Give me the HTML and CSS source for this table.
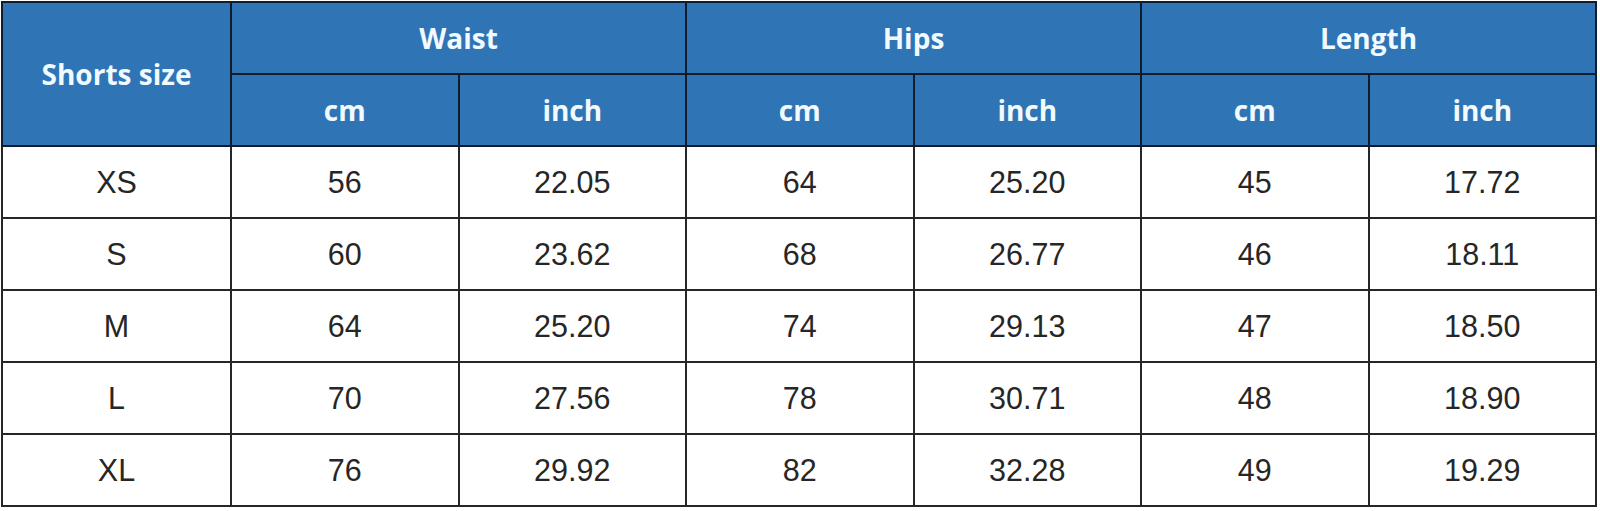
FILE: index.html
```html
<!DOCTYPE html>
<html>
<head>
<meta charset="utf-8">
<link rel="stylesheet" href="styles.css">
</head>
<body>
<table class="size-table">
  <colgroup>
    <col class="c-first">
    <col><col><col><col><col><col>
  </colgroup>
  <thead>
    <tr>
      <th rowspan="2" class="h-size">Shorts size</th>
      <th colspan="2">Waist</th>
      <th colspan="2">Hips</th>
      <th colspan="2">Length</th>
    </tr>
    <tr>
      <th>cm</th><th>inch</th>
      <th>cm</th><th>inch</th>
      <th>cm</th><th>inch</th>
    </tr>
  </thead>
  <tbody>
    <tr><td>XS</td><td>56</td><td>22.05</td><td>64</td><td>25.20</td><td>45</td><td>17.72</td></tr>
    <tr><td>S</td><td>60</td><td>23.62</td><td>68</td><td>26.77</td><td>46</td><td>18.11</td></tr>
    <tr><td>M</td><td>64</td><td>25.20</td><td>74</td><td>29.13</td><td>47</td><td>18.50</td></tr>
    <tr><td>L</td><td>70</td><td>27.56</td><td>78</td><td>30.71</td><td>48</td><td>18.90</td></tr>
    <tr><td>XL</td><td>76</td><td>29.92</td><td>82</td><td>32.28</td><td>49</td><td>19.29</td></tr>
  </tbody>
</table>
</body>
</html>
```

FILE: styles.css
```css
html, body {
  margin: 0;
  padding: 0;
  background: #ffffff;
}

body {
  padding: 1px 0 0 1px;
}

.size-table {
  border-collapse: collapse;
  table-layout: fixed;
  width: 1596px;
}

.c-first {
  width: 229px;
}

.size-table th,
.size-table td {
  border: 2px solid #262626;
  text-align: center;
  vertical-align: middle;
  padding: 0;
}

.size-table th {
  background: #2f74b5;
  color: #f0faff;
  font-family: "Open Sans", "Liberation Sans", sans-serif;
  font-weight: 700;
  font-size: 28px;
  height: 70px;
  border-color: #101c2c;
}

.size-table td {
  font-family: "Liberation Sans", Arial, sans-serif;
  font-size: 30.5px;
  color: #262626;
  height: 70px;
}
```
